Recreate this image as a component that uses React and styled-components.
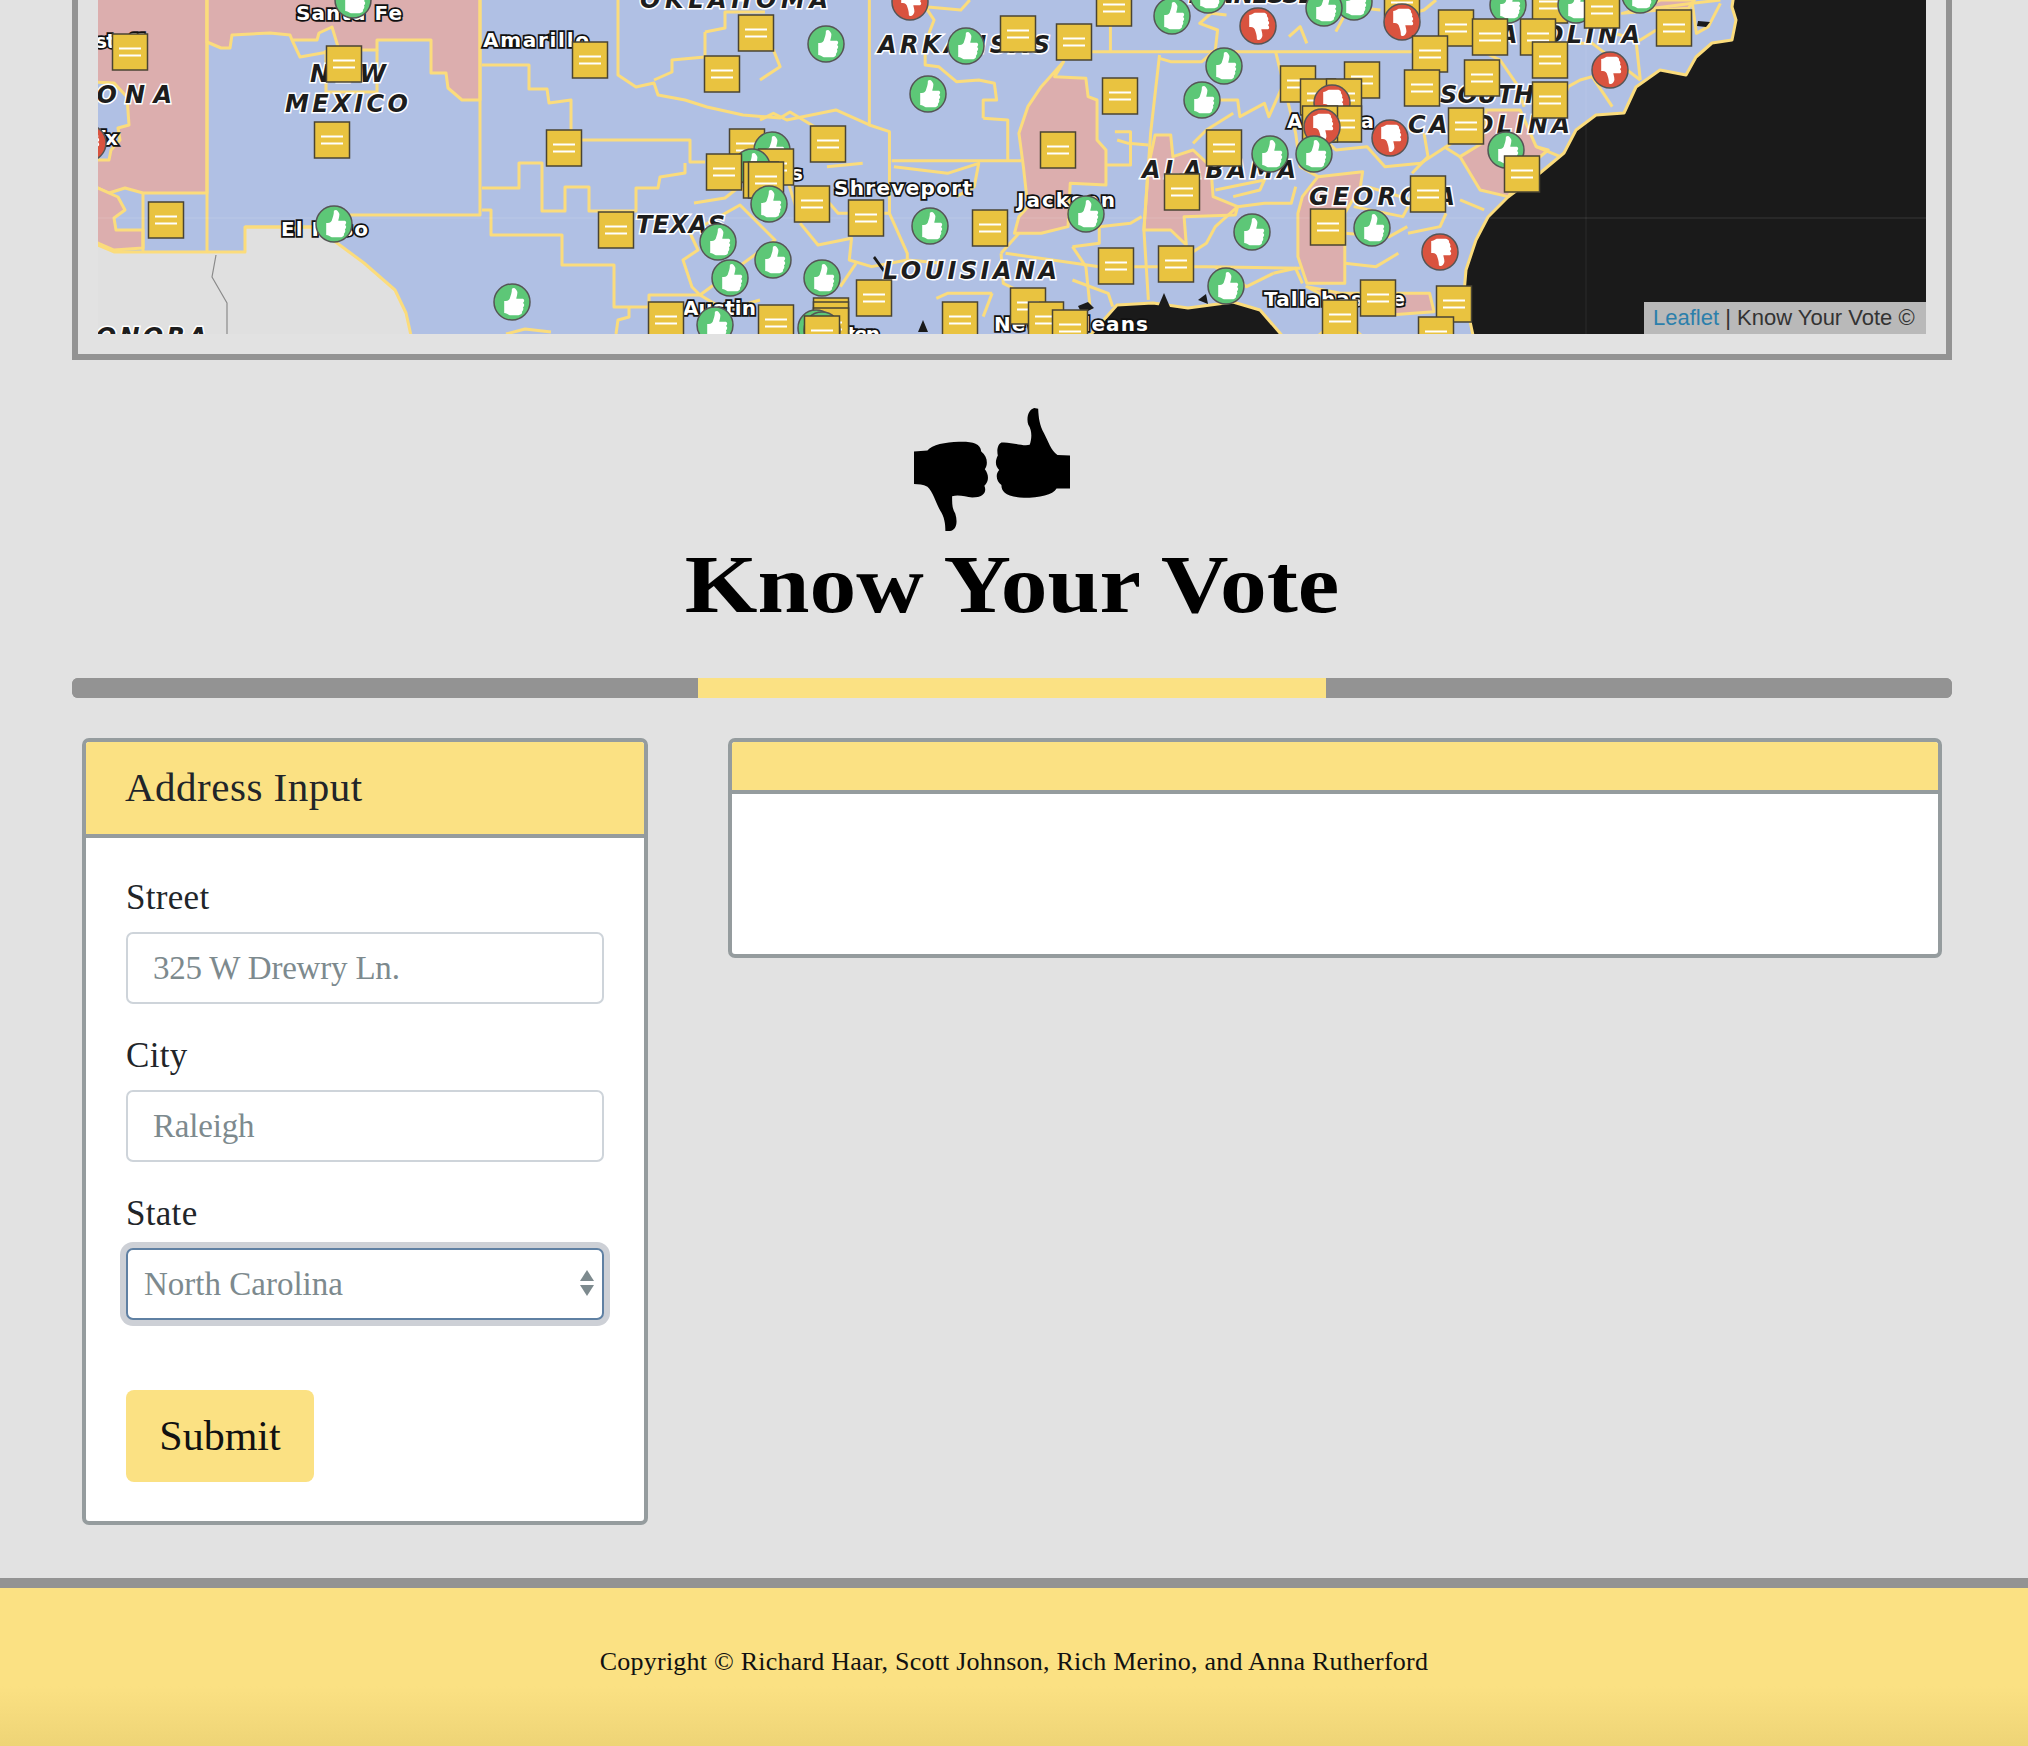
import React from "react";
import styled, { createGlobalStyle } from "styled-components";

const serif = `"Liberation Serif", serif`;
const yellow = "#fbe183";
const steel = "#939393";

const GlobalStyle = createGlobalStyle`
  html, body {
    margin: 0;
    padding: 0;
    background: #e2e2e2;
    overflow: hidden;
  }
  * { box-sizing: border-box; }
`;

const Page = styled.div`
  width: 2028px;
  height: 1746px;
  display: flex;
  flex-direction: column;
  font-family: ${serif};
  color: #212529;
`;

const Container = styled.div`
  width: 1880px;
  margin-left: 72px;
`;

const MapFrame = styled.div`
  border: 6px solid ${steel};
  border-top: none;
  padding: 0 20px 20px;
  height: 360px;
`;

const MapBox = styled.div`
  position: relative;
  height: 334px;
  width: 1828px;
  background: #1a1a1a;
  overflow: hidden;
`;

const MapSvg = styled.svg`
  display: block;
  width: 1828px;
  height: 334px;
`;

const Attribution = styled.div`
  position: absolute;
  right: 0;
  bottom: 0;
  height: 32px;
  width: 282px;
  padding-left: 9px;
  background: #b9b9b9;
  font: 22px/32px "Liberation Sans", sans-serif;
  color: #333;
  white-space: nowrap;
  a { color: #2c7fab; text-decoration: none; }
`;

const Logo = styled.svg`
  display: block;
  width: 156px;
  height: 123px;
  margin: 48px 0 0 842px;
`;

const Title = styled.h1`
  margin: 9px 0 0;
  height: 90px;
  font: bold 82px/90px ${serif};
  text-align: center;
  color: #000;
  transform: scaleX(1.14);
`;

const Bar = styled.div`
  display: flex;
  height: 20px;
  margin-top: 48px;
  border-radius: 6px;
  overflow: hidden;
  background: ${steel};
`;

const BarPart = styled.div`
  flex: ${(p) => (p.$lit ? 628 : 626)};
  background: ${(p) => (p.$lit ? yellow : steel)};
`;

const Content = styled.div`
  display: grid;
  grid-template-columns: 566px 1214px;
  gap: 80px;
  align-items: start;
  margin: 40px 0 0 10px;
`;

const Card = styled.section`
  border: 4px solid #959c9e;
  border-radius: 7px;
  background: #fff;
  overflow: hidden;
`;

const CardHeader = styled.div`
  height: ${(p) => (p.$slim ? "52px" : "96px")};
  padding: 0 39px;
  background: ${yellow};
  border-bottom: 4px solid #959c9e;
  font-size: 41px;
  line-height: 91px;
  letter-spacing: 0.5px;
  color: #212529;
`;

const CardBody = styled.div`
  padding: 40px 40px 39px;
  min-height: ${(p) => (p.$empty ? "160px" : "0")};
`;

const Field = styled.div`
  margin-bottom: 32px;
`;

const Label = styled.label`
  display: block;
  margin-bottom: 14px;
  font-size: 35px;
  line-height: 40px;
  letter-spacing: 0.3px;
`;

const TextInput = styled.input`
  display: block;
  width: 478px;
  height: 72px;
  padding: 0 25px;
  border: 2.5px solid #ced4da;
  border-radius: 7px;
  background: #fff;
  font-family: ${serif};
  font-size: 33px;
  letter-spacing: -0.2px;
  outline: none;
  &::placeholder { color: #7d8a8e; opacity: 1; }
`;

const SelectWrap = styled.div`
  position: relative;
  width: 478px;
  height: 72px;
`;

const Select = styled.select`
  display: block;
  width: 100%;
  height: 100%;
  padding: 0 0 0 16px;
  appearance: none;
  border: 2.5px solid #5f80a3;
  border-radius: 7px;
  box-shadow: 0 0 0 6px #cdd0d6;
  background: #fff;
  font-family: ${serif};
  font-size: 33px;
  color: #7d8a8e;
  outline: none;
`;

const SelectArrows = styled.svg`
  position: absolute;
  top: 22px;
  right: 10px;
  width: 14px;
  height: 26px;
  fill: #7d8a8e;
`;

const SubmitButton = styled.button`
  display: block;
  width: 188px;
  height: 92px;
  margin-top: 70px;
  border: none;
  border-radius: 8px;
  background: ${yellow};
  font-family: ${serif};
  font-size: 42px;
  color: #111;
`;

const Footer = styled.footer`
  flex: 1;
  margin-top: 53px;
  border-top: 10px solid ${steel};
  background: linear-gradient(${yellow} 0, ${yellow} 62%, #eed476 100%);
  text-align: center;
  font-size: 26px;
  line-height: 32px;
  letter-spacing: 0.22px;
  color: #111;
  padding-top: 58px;
`;

const Land = styled.path`
  fill: ${(p) => p.$fill || "none"};
  stroke: ${(p) => p.$stroke || "#fbdc7c"};
  stroke-width: ${(p) => p.$w || 3}px;
  stroke-linejoin: round;
  vector-effect: non-scaling-stroke;
`;

const CityLabel = styled.text`
  font: 700 20px "DejaVu Sans", sans-serif;
  fill: #fff;
  stroke: #111;
  stroke-width: 3.5px;
  paint-order: stroke;
`;

const StateLabel = styled.text`
  font: italic 700 24px "DejaVu Sans", sans-serif;
  fill: #1d1d1d;
  stroke: #fff;
  stroke-width: 3px;
  paint-order: stroke;
`;

const toPath = (pts, close) =>
  "M" + pts.map((p) => p.join(",")).join("L") + (close ? "Z" : "");

// base shapes, page coordinates. outer edges run past the viewBox so their stroke stays hidden
const landShape = [[90,-6],[1734,-6],[1732,7],[1736,20],[1732,40],[1712,43],[1696,57],[1686,75],[1660,70],[1636,87],[1624,113],[1596,115],[1576,130],[1564,153],[1540,173],[1508,197],[1488,217],[1476,240],[1466,270],[1464,293],[1474,340],[1367,340],[1350,326],[1330,326],[1313,340],[1286,340],[1260,310],[1233,302],[1188,308],[1153,303],[1117,305],[1086,340],[90,340]];
const mexico = [[90,242],[98,245],[114,252],[245,252],[245,227],[314,227],[337,243],[364,263],[395,290],[406,313],[412,340],[90,340]];
const arizonaPink = [[90,-6],[207,-6],[207,193],[143,193],[125,188],[109,193],[98,188],[90,188]];
const phoenixHole = [[90,82],[114,83],[127,97],[129,125],[118,128],[120,140],[111,150],[109,160],[90,160]];
const yumaPink = [[90,240],[98,243],[114,250],[143,248],[143,230],[116,230],[114,218],[125,210],[118,197],[98,188],[90,188]];
const newMexicoPink = [[207,-6],[480,-6],[480,100],[462,100],[448,88],[446,73],[431,73],[431,40],[377,40],[377,50],[339,50],[332,27],[319,33],[317,40],[292,40],[290,35],[270,33],[232,35],[230,48],[221,48],[207,42]];

const westLines = [
  [[207,0],[207,252]],
  [[480,0],[480,215],[350,215]],
  [[245,227],[314,227]],
  [[292,40],[300,57],[339,50]],
  [[326,50],[326,92],[377,92],[377,50]],
  [[482,65],[529,65],[529,89],[547,89],[549,103],[571,100],[571,130]],
  [[581,140],[690,140],[690,162],[705,162]],
  [[685,163],[685,173],[660,177],[658,188],[636,188],[636,211],[589,211],[589,187],[565,187],[565,211],[542,211],[542,163],[519,163],[519,188],[482,188]],
  [[482,210],[491,210],[491,235],[562,235],[562,265],[614,265],[614,307],[649,307],[649,295],[703,295]],
  [[629,307],[629,317],[618,320],[616,334]],
  [[618,0],[618,75],[636,87],[654,83],[658,95],[685,100],[707,107],[743,115],[780,118],[790,112],[820,130]],
  [[705,32],[705,57],[672,60],[672,72],[654,80]],
  [[705,32],[725,28],[725,12],[765,12]],
  [[694,203],[725,198],[739,187],[765,205]],
  [[690,233],[698,250],[683,260],[692,287],[700,295],[725,310],[760,300]],
  [[690,233],[740,205],[775,240],[700,295]],
  [[143,193],[143,252]],
  [[506,334],[525,329],[551,332]],
];
const mexicoState = [[216,255],[212,277],[227,303],[227,334]];

// east part, traced on a 2.24 x 3 grid
const southPink = [
  [[680,185],[660,230],[730,235],[735,290],[755,300],[755,420],[775,450],[775,555],[695,550],[690,680],[630,700],[570,700],[580,650],[600,620],[590,500],[580,400],[600,320],[630,260]],
  [[885,405],[920,405],[925,470],[970,450],[1010,500],[1015,590],[1070,620],[1065,645],[950,650],[955,735],[920,690],[860,690],[870,500]],
  [[1250,530],[1350,515],[1345,560],[1310,640],[1310,850],[1225,850],[1205,770],[1205,640],[1215,590]],
  [[1225,860],[1300,880],[1500,880],[1510,935],[1410,945],[1350,900],[1260,885]],
];
const southLines = [
  [[245,0],[245,375],[290,395],[290,640],[330,760],[330,790]],
  [[295,482],[585,482]],
  [[500,355],[555,360],[555,482]],
  [[500,355],[500,300],[530,300],[525,250],[490,240],[440,245],[400,200],[370,195],[370,130],[390,60],[370,20],[450,30],[470,0]],
  [[785,65],[785,155]],
  [[740,155],[1460,155]],
  [[895,165],[875,400],[860,690],[870,900]],
  [[895,175],[920,185],[990,185],[1020,150],[1025,90],[985,70],[1010,40],[1045,45]],
  [[1155,155],[1200,400],[1210,500],[1250,530]],
  [[1185,110],[1210,80],[1225,130]],
  [[1290,95],[1320,20],[1390,30]],
  [[795,395],[830,395],[830,495],[775,495]],
  [[800,420],[825,430],[870,435]],
  [[1030,300],[1070,300],[1075,350],[1130,310],[1140,350],[1170,260]],
  [[970,430],[1000,390],[1060,340]],
  [[1240,390],[1290,450],[1360,440],[1400,500],[1480,490],[1560,420]],
  [[1020,570],[1130,540],[1120,570],[1060,590]],
  [[1070,620],[1130,610],[1190,610],[1200,560]],
  [[700,740],[760,730],[760,680],[830,670],[855,650]],
  [[550,760],[760,800],[1000,800],[1210,805]],
  [[700,740],[730,800],[740,930]],
  [[965,760],[1000,730],[1020,680],[1070,620]],
  [[1020,800],[1090,860],[1150,820]],
  [[1310,790],[1380,800],[1430,760]],
  [[1330,620],[1440,650],[1460,600],[1360,560]],
  [[1450,680],[1410,710],[1310,700]],
  [[90,670],[130,735],[205,715],[200,780],[250,800],[330,780],[410,790]],
  [[180,860],[215,790]],
  [[130,570],[175,640],[290,640]],
  [[80,620],[50,490]],
  [[150,500],[230,490]],
  [[300,500],[420,520],[490,490],[480,560],[440,590]],
  [[540,760],[545,850],[620,900]],
  [[520,880],[500,950]],
  [[395,895],[420,880],[520,880]],
  [[0,360],[30,340],[60,360],[170,330],[245,375]],
  [[0,130],[30,150],[45,200],[0,240]],
  [[580,700],[540,760]],
  [[790,920],[780,880],[700,840]],
  [[1150,820],[1200,805],[1215,850]],
];

// carolinas, traced on a 2.497 x 3 grid
const carolinaPink = [
  [[215,330],[300,330],[340,440],[370,450],[330,490],[270,590],[200,570],[150,470],[205,430]],
  [[555,40],[600,25],[650,0],[735,0],[720,25],[650,30]],
];
const carolinaLines = [
  [[0,50],[60,30],[90,0]],
  [[180,140],[250,180],[290,250],[310,320]],
  [[440,130],[480,130],[600,240]],
  [[590,130],[600,240]],
  [[480,230],[530,320]],
  [[420,260],[450,240],[480,230]],
  [[420,260],[400,330],[340,310]],
  [[60,400],[70,470],[30,520]],
  [[110,440],[150,470]],
  [[340,440],[400,470]],
  [[115,640],[100,680],[20,700]],
  [[150,600],[210,630]],
  [[600,30],[730,10],[800,0]],
  [[730,10],[740,100],[770,80],[800,10]],
  [[500,90],[600,120],[640,90]],
];

const water = ["M1164,293l-6,14l12,0Z", "M1198,300l8,-6l2,10Z", "M875,256l10,14l-2,2l-10,-14Z", "M923,320l5,12l-10,0Z", "M1698,21l12,1l-4,5l-9,-1Z", "M1078,306l10,-4l6,6l-12,6Z"];

const notes = [[130,52],[344,64],[332,140],[166,220],[590,60],[564,148],[722,74],[616,230],[666,320],[756,33],[724,172],[747,147],[761,180],[1114,8],[1018,34],[1074,42],[1120,96],[1058,150],[828,144],[812,204],[866,218],[990,228],[776,167],[766,180],[874,298],[776,323],[831,316],[831,320],[831,326],[822,334],[960,320],[1028,306],[1046,320],[1070,328],[1116,266],[1176,264],[1182,192],[1224,148],[1298,84],[1318,97],[1362,80],[1344,97],[1344,124],[1320,124],[1422,88],[1430,54],[1456,28],[1466,126],[1428,194],[1328,227],[1378,298],[1340,318],[1454,304],[1436,335],[1402,-1],[1490,37],[1538,37],[1602,10],[1674,28],[1550,60],[1482,78],[1550,100],[1522,174],[1550,5]];

const greenPins = [[353,0],[334,224],[512,302],[718,242],[730,278],[715,325],[752,167],[769,204],[773,260],[772,150],[826,44],[966,46],[928,94],[1172,16],[1224,66],[1202,100],[1324,8],[1354,2],[1208,-5],[1270,154],[1314,154],[1252,232],[1372,228],[1226,286],[1086,214],[930,226],[822,278],[822,330],[816,328],[1506,150],[1508,5],[1576,5],[1640,-5]];

const redPins = [[88,143],[910,2],[1258,26],[1402,22],[1332,103],[1322,127],[1390,138],[1440,252],[1610,70]];

const markers = [
  ...notes.map(([x, y]) => ({ x, y, kind: "note" })),
  ...greenPins.map(([x, y]) => ({ x, y, kind: "up" })),
  ...redPins.map(([x, y]) => ({ x, y, kind: "down" })),
].sort((a, b) => a.y - b.y); // leaflet stacks the southern ones on top

const cities = [
  ["Santa Fe", 296, 20, 106],
  ["Amarillo", 483, 47, 106],
  ["Flagstaff", 50, 48, 94],
  ["Phoenix", 40, 145, 78],
  ["El Paso", 281, 236, 87],
  ["Austin", 683, 315, 73],
  ["Dallas", 734, 180, 69],
  ["Shreveport", 834, 195, 138],
  ["Jackson", 1017, 207, 98],
  ["Houston", 800, 341, 80],
  ["Tallahassee", 1264, 306, 141],
  ["New Orleans", 994, 331, 154],
  ["Atlanta", 1287, 128, 87],
];

const states = [
  ["ARIZONA", 0, 103, 172],
  ["NEW", 310, 82, 76],
  ["MEXICO", 285, 112, 123],
  ["TEXAS", 636, 233, 89],
  ["SONORA", 75, 345, 132],
  ["OKLAHOMA", 640, 8, 188],
  ["ARKANSAS", 878, 53, 172],
  ["LOUISIANA", 883, 279, 174],
  ["ALABAMA", 1142, 178, 154],
  ["GEORGIA", 1309, 205, 146],
  ["TENNESSEE", 1185, 3, 145],
  ["SOUTH", 1440, 103, 94],
  ["CAROLINA", 1408, 133, 162],
  ["CAROLINA", 1478, 43, 162],
];

const thumb = "M-8,-1C-6,-1 -4,-1 -3,-3C-2,-6 -1,-8 -1,-12C1,-14 3,-12 4,-9C4,-6 3,-4 3,-3L9,-3C11,-2 10,0 9,1C11,2 10,4 9,5C10,6 9,8 8,9C9,10 7,12 5,12L-3,12C-5,11 -6,10 -8,10Z";

const NoteMarker = ({ x, y }) => (
  <g transform={`translate(${x} ${y})`}>
    <rect x="-17.5" y="-18" width="35" height="36" fill="#e9c340" stroke="#4a4433" strokeWidth="1.5" />
    <rect x="-11" y="-4.5" width="22" height="2" fill="#fff" />
    <rect x="-11" y="2.5" width="22" height="2" fill="#fff" />
  </g>
);

const PinMarker = ({ x, y, down }) => (
  <g transform={`translate(${x} ${y})`}>
    <circle r="18" fill={down ? "#d9533f" : "#5dc777"} stroke="#555" strokeWidth="1.5" />
    <path d={thumb} fill="#fff" transform={down ? "scale(1.1 -1.1)" : "translate(1 0) scale(1.1)"} />
  </g>
);

const StateMap = () => (
  <MapSvg viewBox="98 0 1828 334">
    <rect x="98" y="0" width="1828" height="334" fill="#1a1a1a" />
    <Land d={toPath(landShape, true)} $fill="#b0c0e4" />
    <Land d={toPath(arizonaPink, true)} $fill="#dcaeae" />
    <Land d={toPath(phoenixHole, true)} $fill="#b0c0e4" />
    <Land d={toPath(yumaPink, true)} $fill="#dcaeae" />
    <Land d={toPath(newMexicoPink, true)} $fill="#dcaeae" />
    <Land d={toPath(mexico, true)} $fill="#e0e0e0" />
    <Land d={toPath(mexicoState)} $stroke="#8a8a8a" $w={1.2} />
    {westLines.map((l, i) => <Land key={i} d={toPath(l)} />)}
    <g transform="translate(760 0) scale(0.4464 0.3333)">
      {southPink.map((l, i) => <Land key={i} d={toPath(l, true)} $fill="#dcaeae" />)}
      {southLines.map((l, i) => <Land key={i} d={toPath(l)} />)}
    </g>
    <g transform="translate(1400 0) scale(0.4005 0.3333)">
      {carolinaPink.map((l, i) => <Land key={i} d={toPath(l, true)} $fill="#dcaeae" />)}
      {carolinaLines.map((l, i) => <Land key={i} d={toPath(l)} />)}
    </g>
    {water.map((d) => <path key={d} d={d} fill="#1a1a1a" />)}
    <path d="M98,218H1926" stroke="#fff" strokeOpacity="0.13" />
    <path d="M1586,0V334" stroke="#fff" strokeOpacity="0.08" />
    {states.map(([t, x, y, w]) => (
      <StateLabel key={t + x} x={x} y={y} textLength={w} lengthAdjust="spacing">{t}</StateLabel>
    ))}
    {cities.map(([t, x, y, w]) => (
      <CityLabel key={t} x={x} y={y} textLength={w} lengthAdjust="spacing">{t}</CityLabel>
    ))}
    {markers.map((m, i) =>
      m.kind === "note"
        ? <NoteMarker key={i} x={m.x} y={m.y} />
        : <PinMarker key={i} x={m.x} y={m.y} down={m.kind === "down"} />
    )}
  </MapSvg>
);

const App = () => (
  <>
    <GlobalStyle />
    <Page>
      <Container>
        <MapFrame>
          <MapBox>
            <StateMap />
            <Attribution><a href="#leaflet">Leaflet</a> | Know Your Vote ©</Attribution>
          </MapBox>
        </MapFrame>

        <Logo viewBox="570 55 348 367" preserveAspectRatio="none">
          <path d="M570,185 L600,182 C610,165 640,157 670,156 C700,155 718,160 720,185 C735,200 735,225 728,238 C738,255 737,275 727,287 C733,305 725,322 700,322 C685,320 670,312 655,318 C655,340 655,355 662,370 C668,395 665,420 650,422 L640,422 C640,400 638,380 628,360 C618,335 612,305 600,290 C590,283 580,283 570,282 Z" />
          <path d="M918,197 L890,195 C875,180 870,155 860,130 C850,105 848,85 847,57 L838,55 C825,60 820,85 825,105 C835,125 832,150 828,165 C810,170 785,155 765,158 C755,165 755,185 757,197 C750,215 752,230 760,240 C750,255 755,275 765,285 C765,305 775,320 815,323 C850,322 880,315 888,295 L918,295 Z" />
        </Logo>
        <Title>Know Your Vote</Title>

        <Bar>
          <BarPart />
          <BarPart $lit />
          <BarPart />
        </Bar>

        <Content>
          <Card>
            <CardHeader>Address Input</CardHeader>
            <CardBody>
              <Field>
                <Label>Street</Label>
                <TextInput placeholder="325 W Drewry Ln." />
              </Field>
              <Field>
                <Label>City</Label>
                <TextInput placeholder="Raleigh" />
              </Field>
              <Field>
                <Label>State</Label>
                <SelectWrap>
                  <Select defaultValue="North Carolina">
                    <option>North Carolina</option>
                  </Select>
                  <SelectArrows viewBox="0 0 14 26">
                    <path d="M7,0L14,11H0Z" />
                    <path d="M0,15H14L7,26Z" />
                  </SelectArrows>
                </SelectWrap>
              </Field>
              <SubmitButton type="button">Submit</SubmitButton>
            </CardBody>
          </Card>
          <Card>
            <CardHeader $slim />
            <CardBody $empty />
          </Card>
        </Content>
      </Container>

      <Footer>Copyright © Richard Haar, Scott Johnson, Rich Merino, and Anna Rutherford</Footer>
    </Page>
  </>
);

export default App;
